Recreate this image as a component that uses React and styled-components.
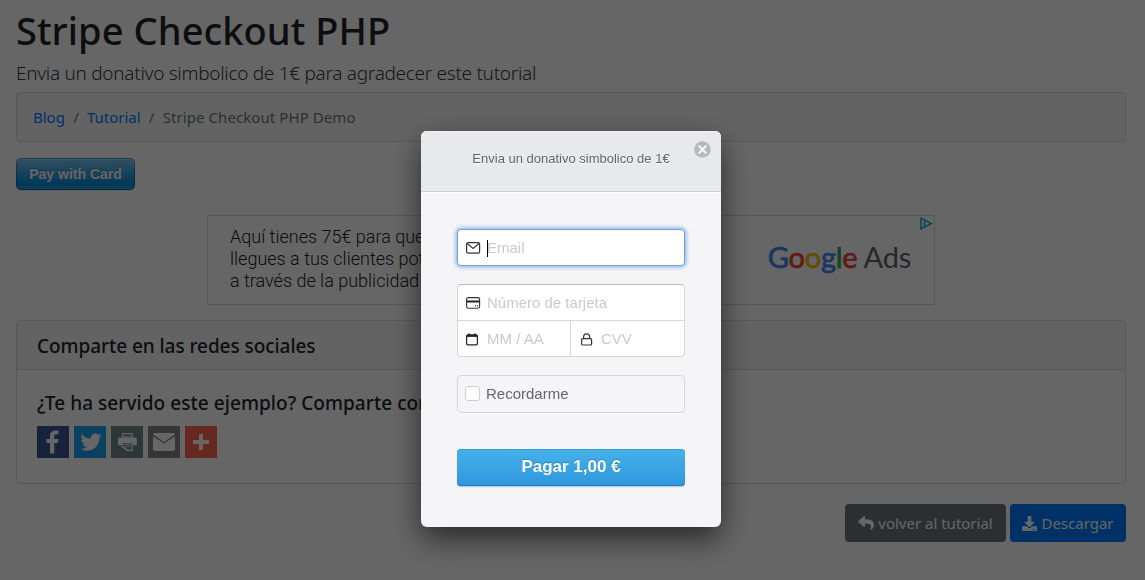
import React from "react";
import styled, { createGlobalStyle } from "styled-components";
import { FaReply, FaDownload } from "react-icons/fa";

const Global = createGlobalStyle`
  *, *::before, *::after { box-sizing: border-box; }
  html, body { margin: 0; height: 580px; overflow: hidden; background: #fff; }
  body {
    font-family: "Noto Sans", "Open Sans", sans-serif;
    font-size: 16px;
    line-height: 1.5;
    color: #212529;
  }
`;

const Page = styled.main`
  padding: 6px 19px 0 16px;
  white-space: nowrap;
`;
const Title = styled.h1`
  margin: 0 0 4px;
  font-size: 38px;
  font-weight: 500;
  line-height: 48px;
  letter-spacing: 0.07px;
`;
const Lead = styled.p`
  margin: 0 0 4px;
  color: #34383c;
  font-size: 19px;
  font-weight: 300;
  line-height: 30px;
  letter-spacing: -0.29px;
`;
const Breadcrumb = styled.nav`
  display: flex;
  align-items: center;
  height: 50px;
  padding: 0 16px;
  border: 1px solid #dcdcdc;
  border-radius: 4px;
  background: #f7f7f7;
  color: #6c757d;
  font-size: 15px;
`;
const Crumb = styled.span`
  color: ${(p) => (p.$link ? "#007bff" : "#6c757d")};
  letter-spacing: ${(p) => p.$track || "0"};
`;
const Slash = styled.span`
  width: 22px;
  text-align: center;
`;
const StripeButton = styled.button`
  display: block;
  width: 119px;
  height: 32px;
  margin: 16px 0 25px;
  padding: 1px;
  border: 0;
  border-radius: 5px;
  background: linear-gradient(#28a0e5, #015e94);
  box-shadow: 0 1px 0 rgba(0, 0, 0, 0.1);
`;
const StripeButtonLabel = styled.span`
  display: block;
  height: 30px;
  border-radius: 4px;
  background: linear-gradient(#7dc5ee, #008cdd 85%, #30a2e4);
  box-shadow: inset 0 1px 0 rgba(255, 255, 255, 0.25);
  color: #fff;
  font: bold 14px/30px "Liberation Sans", Arial, sans-serif;
  text-shadow: 0 -1px 0 rgba(0, 0, 0, 0.25);
`;
const Banner = styled.section`
  display: flex;
  justify-content: space-between;
  width: 728px;
  height: 90px;
  margin: 0 0 15px 191px;
  padding: 0 23px 0 22px;
  border: 1px solid #dadada;
  position: relative;
`;
const BannerCopy = styled.p`
  margin: 10px 0 0;
  color: #222;
  font: 300 18px/22px Roboto, sans-serif;
`;
const GoogleAds = styled.div`
  color: #5f6368;
  font: 400 29px/82px Lato, sans-serif;
  letter-spacing: -0.25px;
`;
const Tint = styled.span`
  color: ${(p) => p.$c};
  -webkit-text-stroke: 0.7px ${(p) => p.$c};
`;
const AdChoices = styled.svg`
  position: absolute;
  top: 1px;
  right: 1px;
`;
const Card = styled.section`
  height: 164px;
  border: 1px solid #dcdcdc;
  border-radius: 4px;
  overflow: hidden;
`;
const CardHeader = styled.header`
  height: 49px;
  padding: 0 20px;
  border-bottom: 1px solid #dcdcdc;
  background: #f7f7f7;
`;
const Heading = styled.h5`
  margin: 0;
  font-size: 19px;
  font-weight: 500;
  line-height: ${(p) => p.$lh};
  letter-spacing: ${(p) => p.$track};
`;
const CardBody = styled.div`
  padding: 21px 20px;
`;
const Shares = styled.div`
  display: flex;
  gap: 5px;
  margin-top: 11px;
`;
const Share = styled.a`
  width: 32px;
  height: 32px;
  background: ${(p) => p.$bg};
  svg { display: block; }
`;
const Actions = styled.div`
  display: flex;
  justify-content: flex-end;
  gap: 4px;
  margin-top: 20px;
`;
const Action = styled.a`
  display: flex;
  align-items: center;
  justify-content: center;
  gap: 4px;
  width: ${(p) => p.$w};
  height: 38px;
  border-radius: 4px;
  background: ${(p) => p.$bg};
  color: #fff;
  font-size: 15px;
`;

const Backdrop = styled.div`
  position: fixed;
  inset: 0;
  padding-top: 131px;
  background: rgba(0, 0, 0, 0.6);
  font-family: "Liberation Sans", Arial, sans-serif;
`;
const Modal = styled.div`
  position: relative;
  width: 300px;
  height: 396px;
  margin-left: 421px;
  border-radius: 6px;
  background: #f5f5f7;
  box-shadow: 0 12px 30px rgba(0, 0, 0, 0.6);
`;
const ModalHeader = styled.header`
  height: 61px;
  padding-top: 18px;
  border-bottom: 1px solid #cfcfd1;
  border-radius: 6px 6px 0 0;
  background: #e8e9eb;
  box-shadow: 0 1px 0 #fff, inset 0 1px 0 #f0f0f2;
  color: #62626a;
  font-size: 13px;
  line-height: 19px;
  text-align: center;
  text-shadow: 0 1px 0 #fff;
`;
const Close = styled.svg`
  position: absolute;
  top: 10px;
  right: 10px;
`;
const Form = styled.form`
  padding: 37px 36px 0;
`;
const Field = styled.label`
  display: flex;
  align-items: center;
  height: 35px;
  padding-top: ${(p) => p.$drop || "0"};
  padding-left: ${(p) => p.$inset || "8px"};
  gap: 6px;
  color: #c9c9ce;
  font-size: 15px;
  svg {
    flex: none;
    margin-bottom: 1px;
  }
`;
const EmailBox = styled.div`
  height: 37px;
  border: 1px solid #6fa3e0;
  border-radius: 4px;
  background: #fff;
  box-shadow: 0 0 4px 1px rgba(80, 145, 225, 0.75);
`;
const Caret = styled.i`
  width: 1px;
  height: 17px;
  margin-right: -7px;
  background: #000;
`;
const CardBox = styled.div`
  height: 73px;
  margin-top: 18px;
  border: 1px solid #d5d5d8;
  border-top-color: #bcbcc0;
  border-radius: 4px;
  background: #fff;
`;
const SplitRow = styled.div`
  display: grid;
  grid-template-columns: 112px 1fr;
  border-top: 1px solid #d8d8db;
  & > * + * { border-left: 1px solid #d8d8db; }
`;
const Remember = styled.label`
  display: flex;
  align-items: center;
  gap: 6px;
  height: 38px;
  margin: 18px 0 36px;
  padding-left: 7px;
  border: 1px solid #d6d6d9;
  border-radius: 4px;
  box-shadow: 0 1px 0 #fff;
  color: #66666e;
  font-size: 15px;
`;
const Check = styled.span`
  width: 15px;
  height: 15px;
  margin-bottom: 1px;
  border: 1px solid #cfcfd3;
  border-radius: 3px;
  background: #fff;
`;
const PayButton = styled.button`
  display: block;
  width: 228px;
  height: 37px;
  padding: 0 0 2px;
  border: 0;
  border-radius: 4px;
  background: linear-gradient(#45b1e8, #3097de);
  box-shadow: inset 0 -1px 0 #2478c4, inset 0 1px 0 #3a9fd6, 0 1px 1px rgba(60, 120, 200, 0.35);
  color: #fff;
  font: bold 17px/34px "Liberation Sans", Arial, sans-serif;
  text-shadow: 0 -1px 0 rgba(0, 50, 110, 0.3);
`;

const MailIcon = () => (
  <svg width="15" height="12" viewBox="0 0 15 12" fill="none" stroke="#333" strokeWidth="1.2">
    <rect x="0.6" y="0.6" width="13" height="10.6" rx="1.6" />
    <path d="M1.2 1.5 7.1 6.4 13 1.5" />
  </svg>
);
const CreditIcon = () => (
  <svg width="15" height="12" viewBox="0 0 15 12" fill="none" stroke="#333" strokeWidth="1.1">
    <rect x="0.6" y="0.6" width="13" height="10.6" rx="1.6" />
    <path d="M.6 4.5h13" stroke="#222" strokeWidth="2" />
    <path d="M9.5 8v1.6M11.5 8v1.6" strokeWidth="0.8" />
  </svg>
);
const CalendarIcon = () => (
  <svg width="15" height="13" viewBox="0 0 15 13" fill="none" stroke="#222" strokeWidth="1.2">
    <rect x="0.6" y="1.8" width="10.8" height="10" rx="1.4" />
    <path d="M.6 2.9h10.8" strokeWidth="2" />
    <path d="M3 .2v2M9 .2v2" />
  </svg>
);
const LockIcon = () => (
  <svg width="14" height="13" viewBox="0 0 14 13" fill="none" stroke="#333" strokeWidth="1.2">
    <rect x="0.6" y="5.6" width="10" height="6.4" rx="1.3" />
    <path d="M2.6 5.6V3.8a3 3 0 0 1 6 0v1.8" />
  </svg>
);

const shares = [
  ["#3b5998", <path key="f" d="M17.78 27.5V17.008h3.522l.527-4.09h-4.05v-2.61c0-1.182.33-1.99 2.023-1.99h2.166V4.66c-.375-.05-1.66-.16-3.155-.16-3.123 0-5.26 1.905-5.26 5.405v3.016h-3.53v4.09h3.53V27.5h4.223z" transform="translate(-0.5 0)" />],
  ["#1da1f2", <path key="t" transform="translate(2.9 2) scale(.88)" d="M28 8.557a9.913 9.913 0 0 1-2.828.775 4.93 4.93 0 0 0 2.166-2.725 9.738 9.738 0 0 1-3.13 1.194 4.92 4.92 0 0 0-3.593-1.55 4.924 4.924 0 0 0-4.794 6.049c-4.09-.21-7.72-2.17-10.15-5.15a4.942 4.942 0 0 0-.665 2.477c0 1.71.87 3.214 2.19 4.1a4.968 4.968 0 0 1-2.23-.616v.06c0 2.39 1.7 4.38 3.952 4.83-.414.115-.85.174-1.297.174-.318 0-.626-.03-.928-.086a4.935 4.935 0 0 0 4.6 3.42 9.893 9.893 0 0 1-6.114 2.107c-.398 0-.79-.023-1.175-.068a13.953 13.953 0 0 0 7.55 2.213c9.056 0 14.01-7.507 14.01-14.013 0-.213-.005-.426-.015-.637.96-.695 1.795-1.56 2.455-2.55z" />],
  ["#738a8d", (
    <g key="p">
      <path d="M11.5 7.7h9.5V11h-9.5z" fill="none" stroke="#fff" strokeWidth="1.2" />
      <path d="M8.5 11.5h15.5a1.8 1.8 0 0 1 1.8 1.8v6H22v-3H11v3H7v-6a1.8 1.8 0 0 1 1.5-1.8z" />
      <path d="M11.3 16.5h9.7v7.8h-5.3c-.8-1.8-2.2-3-4.4-3.6z" fill="none" stroke="#fff" strokeWidth="1.3" />
      <path d="M10.7 20.5c2.5 0 4.8 1.3 5 4.4z" />
      <path d="M13 18.5h6M14.5 20.5h4.5" stroke="#fff" />
    </g>
  )],
  ["#848484", (
    <g key="e">
      <path d="M5 10.2V23a2 2 0 0 0 2 2h18a2 2 0 0 0 2-2V10.2L16 17.5z" />
      <path d="M5 8.6A1.8 1.8 0 0 1 6.8 7h18.4A1.8 1.8 0 0 1 27 8.6L16 16z" />
    </g>
  )],
  ["#ff6550", <path key="+" d="M14 8h4v6h6v4h-6v6h-4v-6H8v-4h6z" />],
];

export default function App() {
  return (
    <>
      <Global />
      <Page>
        <Title>Stripe Checkout PHP</Title>
        <Lead>Envia un donativo simbolico de 1€ para agradecer este tutorial</Lead>
        <Breadcrumb>
          <Crumb $link>Blog</Crumb>
          <Slash>/</Slash>
          <Crumb $link>Tutorial</Crumb>
          <Slash>/</Slash>
          <Crumb $track="0.08px">Stripe Checkout PHP Demo</Crumb>
        </Breadcrumb>
        <StripeButton type="button">
          <StripeButtonLabel>Pay with Card</StripeButtonLabel>
        </StripeButton>
        <Banner>
          <BannerCopy>
            Aquí tienes 75€ para que<br />
            llegues a tus clientes pot<br />
            a través de la publicidad
          </BannerCopy>
          <GoogleAds>
            <Tint $c="#4285f4">G</Tint>
            <Tint $c="#ea4335">o</Tint>
            <Tint $c="#fbbc05">o</Tint>
            <Tint $c="#4285f4">g</Tint>
            <Tint $c="#34a853">l</Tint>
            <Tint $c="#ea4335">e</Tint> Ads
          </GoogleAds>
          <AdChoices width="13" height="13" viewBox="0 0 13 13" fill="none" stroke="#00aecd" strokeWidth="1.5">
            <path d="M1 1.2 11.5 6.5 1 11.8z" />
            <path d="M4.5 4v5" />
          </AdChoices>
        </Banner>
        <Card>
          <CardHeader>
            <Heading $lh="50px" $track="-0.06px">Comparte en las redes sociales</Heading>
          </CardHeader>
          <CardBody>
            <Heading $lh="24px" $track="0.06px">¿Te ha servido este ejemplo? Comparte con</Heading>
            <Shares>
              {shares.map(([bg, glyph]) => (
                <Share key={bg} $bg={bg}>
                  <svg width="32" height="32" viewBox="0 0 32 32" fill="#fff">{glyph}</svg>
                </Share>
              ))}
            </Shares>
          </CardBody>
        </Card>
        <Actions>
          <Action $w="161px" $bg="#6c757d"><FaReply size={16} />volver al tutorial</Action>
          <Action $w="116px" $bg="#007bff"><FaDownload size={15} />Descargar</Action>
        </Actions>
      </Page>
      <Backdrop>
        <Modal>
          <ModalHeader>Envia un donativo simbolico de 1€</ModalHeader>
          <Close width="17" height="17" viewBox="0 0 17 17">
            <circle cx="8.5" cy="8.5" r="8.3" fill="#b7b8ba" />
            <path d="M5.3 5.3l6.4 6.4M11.7 5.3l-6.4 6.4" stroke="#f4f4f5" strokeWidth="2.2" strokeLinecap="round" />
          </Close>
          <Form>
            <EmailBox>
              <Field $drop="2px"><MailIcon /><Caret />Email</Field>
            </EmailBox>
            <CardBox>
              <Field $drop="2px"><CreditIcon />Número de tarjeta</Field>
              <SplitRow>
                <Field $drop="2px"><CalendarIcon />MM / AA</Field>
                <Field $drop="2px" $inset="10px"><LockIcon />CVV</Field>
              </SplitRow>
            </CardBox>
            <Remember><Check />Recordarme</Remember>
            <PayButton type="button">Pagar 1,00 €</PayButton>
          </Form>
        </Modal>
      </Backdrop>
    </>
  );
}
